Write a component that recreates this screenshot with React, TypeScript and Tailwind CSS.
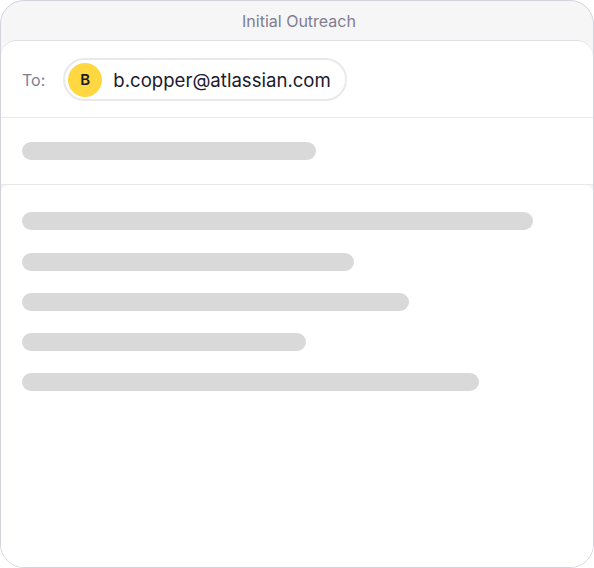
export default function App() {
  const bars = ["w-[511px]", "w-[332px]", "w-[387px]", "w-[284px]", "w-[457px]"];
  return (
    <div className="h-[568px] w-[594px] overflow-hidden rounded-[24px] border border-[#d3d3dd] bg-[#f6f6f7] font-['Inter',sans-serif]">
      <div className="flex h-[39px] items-center justify-center pl-[4px] text-[16px] text-[#7f7d92]">Initial Outreach</div>
      <div className="flex h-[528px] flex-col rounded-t-[16px] border-t border-[#e0e0e6] bg-white">
        <div className="flex h-[77px] items-center gap-[18px] border-b border-[#e8e8ec] pl-[21px] pt-[1px]">
          <span className="text-[16px] text-[#7f7d92]">To:</span>
          <div className="flex h-[43px] w-[284px] items-center gap-[11px] rounded-full border-2 border-[#e9e9ec] pl-[3px]">
            <div className="flex h-[34px] w-[34px] items-center justify-center rounded-full bg-[#ffd740] pt-[1px] text-[15px] font-semibold text-[#1c1a2e]">B</div>
            <span className="pt-[2px] text-[18.6px] text-[#1c1a2e]">b.copper@atlassian.com</span>
          </div>
        </div>
        <div className="flex h-[67px] items-center border-b border-[#e8e8ec] pb-[1px] pl-[21px]">
          <div className="h-[18px] w-[294px] rounded-full bg-[#d9d9d9]" />
        </div>
        <div className="flex-1 bg-[#f4f4f8]">
          <div className="flex h-full flex-col gap-[22.25px] rounded-t-[8px] bg-white pl-[21px] pt-[27.4px]">
            {bars.map((w) => (
              <div key={w} className={`h-[18px] rounded-full bg-[#d9d9d9] ${w}`} />
            ))}
          </div>
        </div>
      </div>
    </div>
  );
}
